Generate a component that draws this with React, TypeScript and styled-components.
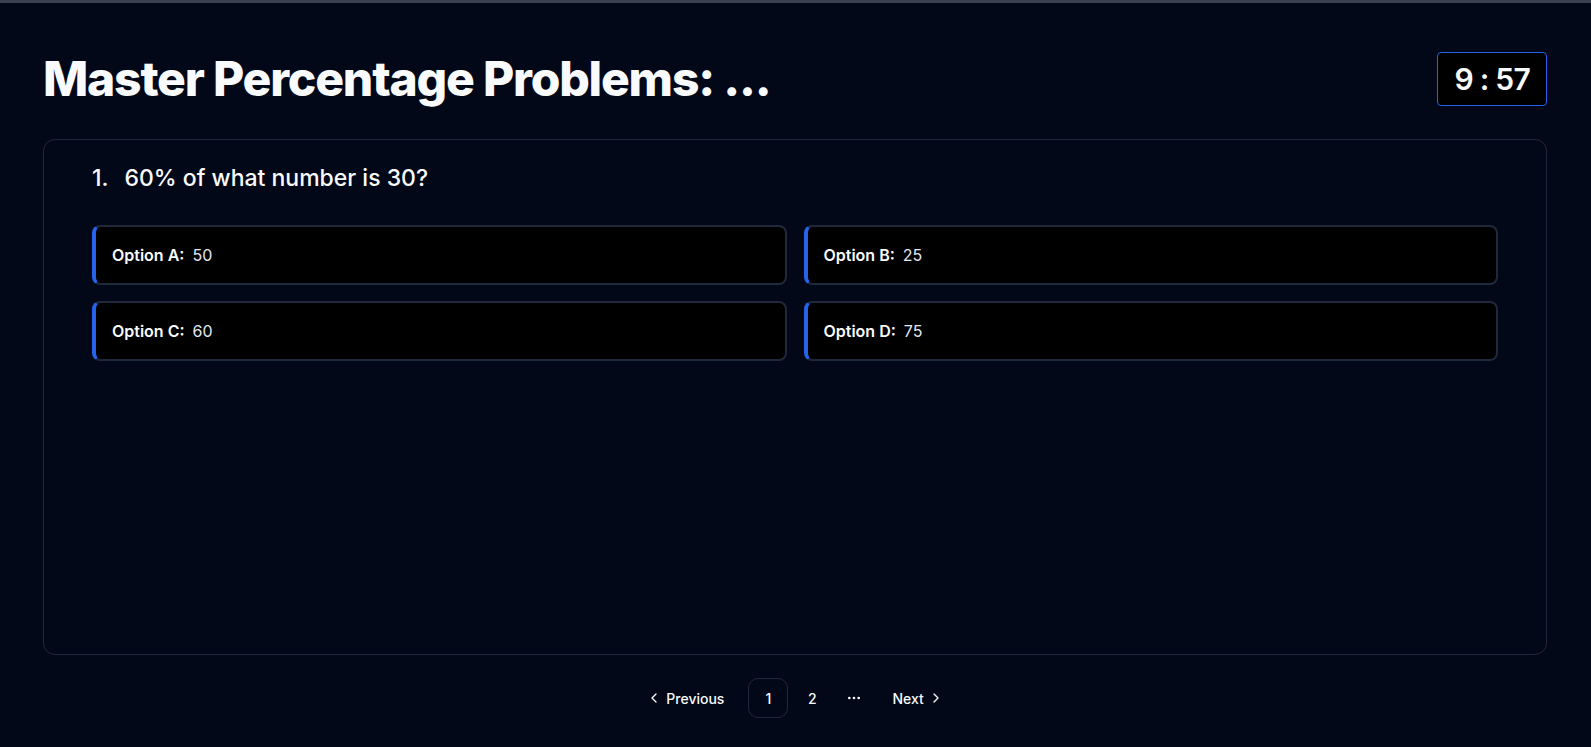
import React from "react";
import styled, { createGlobalStyle } from "styled-components";

const GlobalStyle = createGlobalStyle`
  * { box-sizing: border-box; }
  html, body { margin: 0; padding: 0; background: #020817; }
  body {
    font-family: Inter, "Noto Sans", "Liberation Sans", sans-serif;
    color: #f8fafc;
    -webkit-font-smoothing: antialiased;
  }
`;

const TopBar = styled.div`
  height: 3px;
  background: #3a4150;
`;

const Page = styled.main`
  padding: 49px 44px 0 43px;
  display: flex;
  flex-direction: column;
`;

const Header = styled.header`
  display: flex;
  align-items: center;
  justify-content: space-between;
  height: 54px;
`;

const Title = styled.h1`
  margin: 0;
  font-size: 48px;
  line-height: 1;
  font-weight: 800;
  letter-spacing: -0.025em;
  color: #f8fafc;
`;

const Timer = styled.div`
  border: 1px solid #2563eb;
  border-radius: 4px;
  background: #000;
  padding: 8px 16px;
  font-size: 30px;
  line-height: 36px;
  font-weight: 600;
  letter-spacing: -0.025em;
  color: #f8fafc;
`;

const Card = styled.section`
  margin-top: 33px;
  height: 516px;
  border: 1px solid #1e293b;
  border-radius: 12px;
  padding: 22px 48px;
`;

const Question = styled.div`
  display: flex;
  gap: 16px;
  font-size: 23px;
  line-height: 32px;
  font-weight: 500;
  color: #f8fafc;
`;

const Options = styled.div`
  margin-top: 31px;
  display: grid;
  grid-template-columns: 1fr 1fr;
  gap: 16px 17px;
`;

const Option = styled.button`
  display: flex;
  align-items: center;
  text-align: left;
  background: #000;
  border: 2px solid #1e293b;
  border-left: 4px solid #2563eb;
  border-radius: 8px;
  padding: 16px;
  font-family: inherit;
  font-size: 16px;
  line-height: 24px;
  color: #e2e8f0;
  cursor: pointer;
`;

const OptionLabel = styled.span`
  font-weight: 600;
  color: #f8fafc;
  margin-right: 8px;
`;

const Pagination = styled.nav`
  margin-top: 23px;
  display: flex;
  justify-content: center;
`;

const PageList = styled.ul`
  list-style: none;
  margin: 0;
  padding: 0;
  display: flex;
  align-items: center;
  gap: 4px;
`;

const NavButton = styled.a<{ $side: "prev" | "next" }>`
  display: flex;
  align-items: center;
  gap: 4px;
  height: 40px;
  padding: ${(p) => (p.$side === "prev" ? "0 20px 0 10px" : "0 10px 0 16px")};
  font-size: 14px;
  font-weight: 500;
  color: #f8fafc;
  border-radius: 8px;
  cursor: pointer;
`;

const PageLink = styled.a<{ $active?: boolean }>`
  display: flex;
  align-items: center;
  justify-content: center;
  width: 40px;
  height: 40px;
  border-radius: 10px;
  border: 1px solid ${(p) => (p.$active ? "#1e293b" : "transparent")};
  font-size: 14px;
  font-weight: 500;
  color: #f8fafc;
  cursor: pointer;
`;

const Ellipsis = styled.span`
  display: flex;
  align-items: center;
  justify-content: center;
  width: 36px;
  height: 36px;
`;

const Chevron = ({ dir }: { dir: "left" | "right" }) => (
  <svg width="16" height="16" viewBox="0 0 24 24" fill="none" stroke="currentColor" strokeWidth="2" strokeLinecap="round" strokeLinejoin="round">
    <path d={dir === "left" ? "m15 18-6-6 6-6" : "m9 18 6-6-6-6"} />
  </svg>
);

const Dots = () => (
  <svg width="16" height="16" viewBox="0 0 24 24" fill="currentColor" stroke="currentColor" strokeWidth="2">
    <circle cx="12" cy="12" r="1" />
    <circle cx="19" cy="12" r="1" />
    <circle cx="5" cy="12" r="1" />
  </svg>
);

const options = [
  { label: "Option A:", value: "50" },
  { label: "Option B:", value: "25" },
  { label: "Option C:", value: "60" },
  { label: "Option D:", value: "75" },
];

export default function App() {
  return (
    <>
      <GlobalStyle />
      <TopBar />
      <Page>
        <Header>
          <Title>Master Percentage Problems: ...</Title>
          <Timer>9 : 57</Timer>
        </Header>
        <Card>
          <Question>
            <span>1.</span>
            <span>60% of what number is 30?</span>
          </Question>
          <Options>
            {options.map((o) => (
              <Option key={o.label}>
                <OptionLabel>{o.label}</OptionLabel>
                {o.value}
              </Option>
            ))}
          </Options>
        </Card>
        <Pagination>
          <PageList>
            <li>
              <NavButton $side="prev">
                <Chevron dir="left" />
                <span>Previous</span>
              </NavButton>
            </li>
            <li>
              <PageLink $active>1</PageLink>
            </li>
            <li>
              <PageLink>2</PageLink>
            </li>
            <li>
              <Ellipsis>
                <Dots />
              </Ellipsis>
            </li>
            <li>
              <NavButton $side="next">
                <span>Next</span>
                <Chevron dir="right" />
              </NavButton>
            </li>
          </PageList>
        </Pagination>
      </Page>
    </>
  );
}
